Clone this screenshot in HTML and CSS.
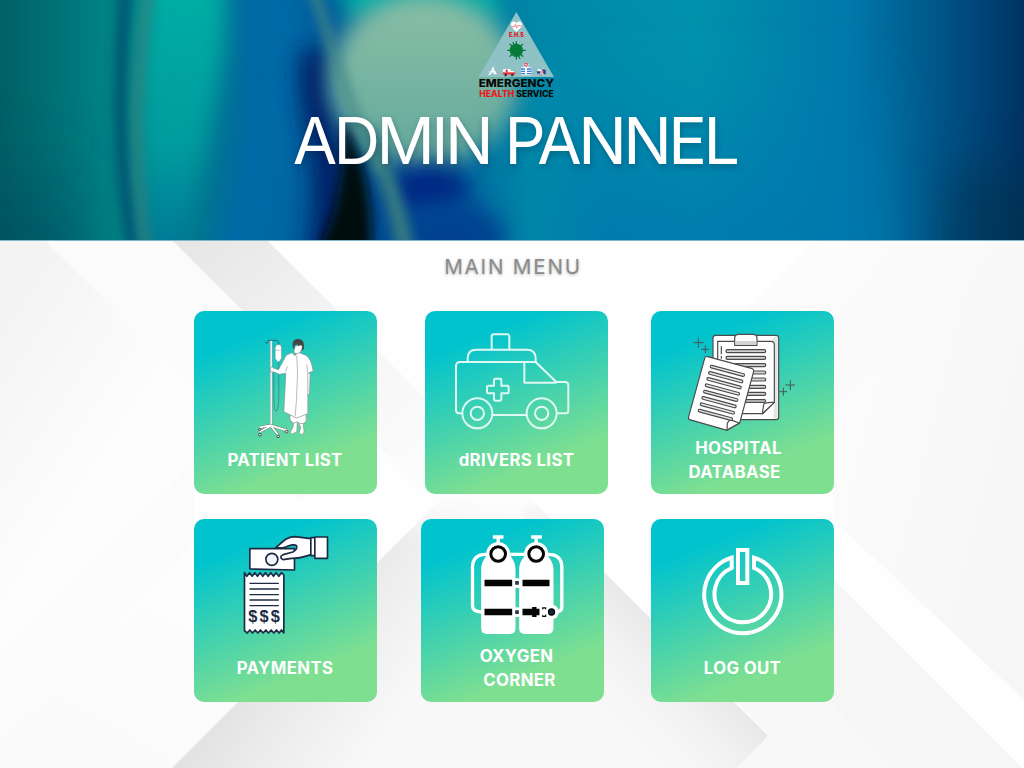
FILE: index.html
```html
<!DOCTYPE html>
<html lang="en">
<head>
<meta charset="utf-8">
<title>Admin Pannel</title>
<link rel="stylesheet" href="styles.css">
</head>
<body>
<svg class="page-art" viewBox="0 240 1024 528" aria-hidden="true">
  <defs>
    <linearGradient id="a1" x1="0" y1="0" x2="1" y2="1"><stop offset="0" stop-color="#e5e5e5"/><stop offset=".45" stop-color="#f5f5f5"/><stop offset="1" stop-color="#fefefe"/></linearGradient>
    <linearGradient id="a2" x1="0" y1="1" x2=".7" y2=".2"><stop offset="0" stop-color="#f5f5f5"/><stop offset="1" stop-color="#fefefe"/></linearGradient>
    <linearGradient id="a3" gradientUnits="userSpaceOnUse" x1="190" y1="700" x2="340" y2="800"><stop offset="0" stop-color="#dedede"/><stop offset=".55" stop-color="#ededed"/><stop offset="1" stop-color="#f8f8f8"/></linearGradient>
    <linearGradient id="a4" gradientUnits="userSpaceOnUse" x1="690" y1="660" x2="610" y2="740"><stop offset="0" stop-color="#e8e8e8"/><stop offset="1" stop-color="#f8f8f8" stop-opacity="0"/></linearGradient>
    <linearGradient id="a5" gradientUnits="userSpaceOnUse" x1="0" y1="300" x2="150" y2="400"><stop offset="0" stop-color="#f3f3f3"/><stop offset="1" stop-color="#fdfdfd"/></linearGradient>
    <linearGradient id="a6" x1="0" y1="0" x2="1" y2=".6"><stop offset="0" stop-color="#fcfcfc"/><stop offset="1" stop-color="#f3f3f3"/></linearGradient>
    <linearGradient id="a7" x1="0" y1="0" x2="0" y2="1"><stop offset="0" stop-color="#fefefe"/><stop offset="1" stop-color="#fefefe" stop-opacity="0"/></linearGradient>
  </defs>
  <rect y="240" width="1024" height="528" fill="#fefefe"/>
  <path d="M0 240H45L194 389V462L0 650Z" fill="url(#a5)"/>
  <path d="M45 240H172L372 440L300 500L194 389Z" fill="#fbfbfb"/>
  <path d="M172 240H267L480 453L430 498Z" fill="url(#a1)"/>
  <path d="M0 768V740L240 505H455L190 768Z" fill="url(#a2)" opacity=".5"/>
  <path d="M0 650L194 462V545L0 740Z" fill="#fbfbfb"/>
  <path d="M815 240H1005L830 415L740 420V315Z" fill="url(#a6)" opacity=".55"/>
  <path d="M1005 240H1024V700L834 520V411Z" fill="url(#a6)" opacity=".7"/>
  <path d="M834 580L1022 768H890L790 668Z" fill="#f6f6f6"/>
  <path d="M735 700L830 702L890 768H737L768 736Z" fill="#f8f8f8"/>
  <path d="M172 768L445 495H527L768 736L737 768Z" fill="url(#a3)"/>
  <path d="M527 495L768 736L737 768H480Z" fill="url(#a4)"/>
  <rect x="376" y="494" width="275" height="50" fill="url(#a7)"/>
</svg>

<header class="banner">
  <svg class="banner-art" viewBox="0 0 1024 240" preserveAspectRatio="none" aria-hidden="true">
    <defs>
      <linearGradient id="b0" x1="0" y1="0" x2="1" y2="0"><stop offset="0" stop-color="#006066"/><stop offset=".1" stop-color="#008184"/><stop offset=".14" stop-color="#00807f"/><stop offset=".26" stop-color="#0068a2"/><stop offset=".38" stop-color="#004b94"/><stop offset=".52" stop-color="#0087a8"/><stop offset=".68" stop-color="#0092ac"/><stop offset=".83" stop-color="#0078aa"/><stop offset=".92" stop-color="#005487"/><stop offset="1" stop-color="#003264"/></linearGradient>
      <linearGradient id="b1" x1="0" y1="0" x2="0" y2="1"><stop offset="0" stop-color="#00b0a6"/><stop offset=".6" stop-color="#009b9e"/><stop offset="1" stop-color="#007096"/></linearGradient>
      <linearGradient id="b2" x1="0" y1="0" x2="0" y2="1"><stop offset=".25" stop-color="#0077b2" stop-opacity="0"/><stop offset="1" stop-color="#0078ac"/></linearGradient>
      <linearGradient id="b3" x1="0" y1="0" x2="0" y2="1"><stop offset="0" stop-color="#8abfa5"/><stop offset="1" stop-color="#62a89d"/></linearGradient>
      <linearGradient id="b4" x1="0" y1="0" x2="0" y2="1"><stop offset=".4" stop-color="#003e58" stop-opacity="0"/><stop offset="1" stop-color="#003e58" stop-opacity=".6"/></linearGradient>
      <filter id="f6" filterUnits="userSpaceOnUse" x="-100" y="-100" width="1224" height="440"><feGaussianBlur stdDeviation="6"/></filter>
      <filter id="f12" filterUnits="userSpaceOnUse" x="-100" y="-100" width="1224" height="440"><feGaussianBlur stdDeviation="11"/></filter>
      <filter id="f22" filterUnits="userSpaceOnUse" x="-150" y="-150" width="1324" height="540"><feGaussianBlur stdDeviation="26"/></filter>
    </defs>
    <rect width="1024" height="240" fill="url(#b0)"/>
    <rect x="560" y="-20" width="330" height="300" fill="url(#b2)" filter="url(#f22)"/>
    <rect x="-60" width="150" height="300" fill="url(#b4)" filter="url(#f22)"/>
    <path d="M127 -20C118 80 118 170 138 270" stroke="#00476e" stroke-width="10" fill="none" filter="url(#f6)"/>
    <path d="M150 -30H222C238 50 200 150 184 270H152C136 160 136 60 150 -30Z" fill="url(#b1)" filter="url(#f12)"/>
    <path d="M150 -20C135 80 132 160 148 270" stroke="#467f7e" stroke-width="6" fill="none" filter="url(#f6)"/>
    <path d="M262 -30C290 50 275 150 235 280" stroke="#0069a6" stroke-width="52" fill="none" filter="url(#f12)"/>
    <path d="M316 50C308 130 344 140 322 270" stroke="#002468" stroke-width="32" fill="none" filter="url(#f12)"/>
    <path d="M330 -30H500V24H350Z" fill="#00a7a4" filter="url(#f12)"/>
    <ellipse cx="424" cy="80" rx="94" ry="86" fill="url(#b3)" filter="url(#f12)"/>
    <ellipse cx="430" cy="190" rx="40" ry="24" fill="#002783" filter="url(#f12)"/>
    <ellipse cx="450" cy="238" rx="56" ry="38" fill="#004291" filter="url(#f12)"/>
    <path d="M346 122C362 155 378 205 370 270H305C341 218 340 175 346 122Z" fill="#00070e" filter="url(#f6)"/>
    <path d="M366 130C388 175 398 210 410 270" stroke="#347c82" stroke-width="17" fill="none" filter="url(#f6)"/>
    <path d="M312 -15C340 70 350 115 384 170" stroke="#478b86" stroke-width="8" fill="none" filter="url(#f6)"/>
    <rect x="950" y="170" width="160" height="140" fill="#00304e" opacity=".6" filter="url(#f22)"/>
  </svg>
  <svg class="logo" viewBox="0 0 240 270" role="img" aria-label="Emergency Health Service">
    <path d="M115 0L228 195H2Z" fill="#8fc2c5"/>
    <path d="M115 60C105 50 99 45 99 37C99 27 111 26 115 34C119 26 132 27 132 37C132 45 125 51 115 60Z" fill="#fff"/>
    <path d="M101 44H109L112 37L116 48L119 41H130" fill="none" stroke="#e94a50" stroke-width="2"/>
    <text class="logo-ehs" x="93" y="76" textLength="44" lengthAdjust="spacingAndGlyphs">E.H.S</text>
    <g stroke="#087b3b" stroke-width="4" stroke-linecap="round"><path d="M115 89V141M89 115H142M96 97L134 133M134 97L96 133M105 92L111 102M125 139L120 128"/></g>
    <circle cx="115" cy="115" r="20" fill="#087b3b"/>
    <g fill="#f4f8ff">
      <circle cx="45" cy="170" r="4"/><path d="M37 174H50L57 187H48L44 180L36 189H30L39 178L31 181Z"/>
      <path d="M75 171H98V177H107L112 184V188H75Z"/><path d="M129 166H137V156H151V166H160V190H129Z"/>
      <path d="M181 170L190 174L197 168L201 187H184L176 183Z"/>
    </g>
    <path d="M58 177L62 190M33 177L40 174M55 172H61" stroke="#aab4b8" stroke-width="3"/>
    <path d="M75 181H112V188H75Z" fill="#ec3034"/><path d="M83 173H89V181H83Z" fill="#ec3034"/>
    <circle cx="83" cy="189" r="4" fill="#333"/><circle cx="103" cy="189" r="4" fill="#333"/>
    <path d="M129 171H141M147 171H160M129 178H141M147 178H160M129 185H141M147 185H160" stroke="#367ed7" stroke-width="4"/>
    <circle cx="144" cy="158" r="6" fill="#dc3548"/><path d="M144 154V162M140 158H148" stroke="#fff" stroke-width="2"/>
    <path d="M176 178H187V185H178ZM193 170L203 174V188L194 184Z" fill="#263f91"/><path d="M189 177H195V183H189ZM183 189H192" stroke="#df4e59" fill="#fff" stroke-width="2"/>
    <text class="logo-name" x="2" y="225" textLength="226" lengthAdjust="spacingAndGlyphs">EMERGENCY</text>
    <text class="logo-sub" x="4" y="255" textLength="223" lengthAdjust="spacingAndGlyphs"><tspan class="red">HEALTH</tspan> SERVICE</text>
  </svg>
  <h1 class="title">ADMIN PANNEL</h1>
</header>

<main class="menu">
  <h2 class="menu-title">MAIN MENU</h2>

  <div class="row row-top">
    <a class="card">
      <svg class="art" viewBox="10.5 18 549 372" aria-hidden="true">
        <path d="M224 110L229 116L233 106H260L265 113V119" fill="none" stroke="#276b72" stroke-width="3"/>
        <path d="M242 107V365" stroke="#8fa5a5" stroke-width="8"/><path d="M242 108V365" stroke="#fff" stroke-width="4"/>
        <path d="M265 168V250C266 290 263 312 258 318C249 318 250 304 250 203" fill="none" stroke="#3e7778" stroke-width="2"/>
        <path d="M258 119H270L273 128V160L266 170H261L254 160V128Z" fill="#fff" stroke="#738f92" stroke-width="1.5"/><path d="M254 136H273" stroke="#aaa" stroke-width="2"/>
        <path d="M207 367L240 361L289 376M240 364L207 380M243 365L263 389" fill="none" stroke="#777" stroke-width="8"/><path d="M207 367L240 361L289 376M240 364L207 380M243 365L263 389" fill="none" stroke="#fff" stroke-width="5"/>
        <g fill="#eee" stroke="#444" stroke-width="3"><circle cx="207" cy="374" r="3"/><circle cx="208" cy="389" r="4"/><circle cx="263" cy="394" r="4"/><circle cx="288" cy="380" r="4"/></g>
        <g fill="#fff" stroke="#8a8f90" stroke-width="2" stroke-linejoin="round">
          <path d="M303 330L300 349L309 354L308 366L299 382L305 387L319 380L321 334ZM327 334L325 356L331 367L326 384L333 389L341 382L338 357L344 351L346 329Z"/>
          <path d="M298 330L299 346L309 354L320 350L328 356L340 355L347 348V328Z"/>
          <path d="M347 198L344 263L350 271L357 267L359 207Z"/>
          <path d="M304 143L287 151L264 194L250 190L244 185L239 192L242 201L251 201L267 208L286 205L280 320L302 331L318 339L352 326V205L368 198C364 174 357 153 341 149L324 142L313 151Z"/>
          <path d="M310 143L313 125L330 117L336 124L331 140L320 146Z"/>
        </g>
        <path d="M309 147L319 154L321 205L318 284L314 334M291 184L285 200M349 178L351 203" fill="none" stroke="#999" stroke-width="2"/>
        <path d="M308 130C304 116 307 103 320 102C337 101 342 111 340 133L334 138C337 129 335 122 332 120L322 124V118L312 121V132Z" fill="#464649"/>
      </svg>
      <span class="label">PATIENT LIST</span>
    </a>
    <a class="card">
      <svg class="art" viewBox="15 18 549 372" aria-hidden="true">
        <g class="ambulance">
          <path d="M215 133V94Q215 88 221 88H262Q268 88 268 94V133M143 170V160Q143 134 169 134H321Q347 134 347 160V170M128 325H119Q108 325 108 314V184Q108 171 121 171H347L409 231H435Q445 231 445 241V318Q445 325 438 325H411M313 171V233H409M218 330H320"/>
          <circle cx="172" cy="325" r="45"/><circle cx="172" cy="325" r="20"/><circle cx="365" cy="325" r="45"/><circle cx="365" cy="325" r="20"/>
          <path d="M226 221H240Q244 221 244 225V242H262Q266 242 266 246V261Q266 265 262 265H244V283Q244 287 240 287H226Q222 287 222 283V265H205Q201 265 201 261V246Q201 242 205 242H222V225Q222 221 226 221Z"/>
        </g>
      </svg>
      <span class="label drivers">dRIVERS LIST</span>
    </a>
    <a class="card">
      <svg class="art" viewBox="9 18 549 372" aria-hidden="true">
        <path d="M151 98V129M136 113H167M172 121V145M160 133H184M427 226V255M412 240H441M406 248V272M395 260H417" stroke="#4c5356" stroke-width="3"/>
        <g fill="#fff" stroke="#4b4b4d" stroke-width="3.5" stroke-linejoin="round">
          <rect x="195" y="91" width="197" height="253" rx="8"/>
          <path d="M389 98V336Q389 341 384 341H376L378 292V116L368 109L382 94Z" fill="#e5e5e5" stroke="none"/>
          <path d="M209 109H369Q379 109 379 119V292L345 326H209Z"/>
          <path d="M343 326L347 299Q348 291 379 292Z"/>
          <path d="M260 121V100Q260 88 272 88H315Q327 88 327 100V121Z"/>
          <path d="M262 108H325V119H262Z" fill="#d4d4d4" stroke="none"/>
          <path d="M220 124V148M220 153V161" fill="none"/>
          <g fill="#d1d1d1"><rect x="234" y="134" width="119" height="9" rx="4"/><rect x="234" y="154" width="119" height="9" rx="4"/><rect x="234" y="176" width="119" height="9" rx="4"/><rect x="234" y="198" width="119" height="9" rx="4"/><rect x="234" y="219" width="119" height="9" rx="4"/><rect x="234" y="241" width="119" height="9" rx="4"/><rect x="234" y="262" width="119" height="9" rx="4"/><rect x="234" y="284" width="119" height="8" rx="4"/></g>
          <path d="M179 155L313 191Q318 193 317 199L275 354L237 376L125 344Q120 342 122 335L170 160Q172 153 179 155Z"/>
          <path d="M237 375L238 355Q244 342 252 346L274 354Z"/>
          <g fill="#e8e8e8"><rect x="188" y="180" width="106" height="8" rx="4" transform="rotate(15 188 180)"/><rect x="183" y="199" width="106" height="8" rx="4" transform="rotate(15 183 199)"/><rect x="178" y="217" width="106" height="8" rx="4" transform="rotate(15 178 217)"/><rect x="173" y="236" width="106" height="8" rx="4" transform="rotate(15 173 236)"/><rect x="168" y="255" width="106" height="8" rx="4" transform="rotate(15 168 255)"/><rect x="163" y="274" width="106" height="8" rx="4" transform="rotate(15 163 274)"/><rect x="158" y="293" width="106" height="8" rx="4" transform="rotate(15 158 293)"/><rect x="152" y="312" width="106" height="8" rx="4" transform="rotate(15 152 312)"/></g>
        </g>
      </svg>
      <span class="label hospital"><span class="line">HOSPITAL</span><span class="line database">DATABASE</span></span>
    </a>
  </div>

  <div class="row row-bottom">
    <a class="card">
      <svg class="art" viewBox="10.5 12 549 372" aria-hidden="true">
        <g fill="#fff" stroke="#1c2b43" stroke-width="5" stroke-linejoin="round">
          <path d="M178 101H312V165L178 162Z"/>
          <circle cx="244" cy="133" r="18" fill="#f1f5fc"/>
          <path d="M255 99C278 80 288 65 313 65L361 71V119C341 125 331 131 303 130L278 134C268 130 269 122 278 119L307 111C316 106 321 99 318 92C308 84 294 94 278 98Z"/>
          <path d="M361 68H373V122H361ZM373 66H411V130H373Z"/>
          <path d="M162 173L169 184L177 173L185 184L193 173L201 184L209 173L217 184L225 173L233 184L241 173L249 184L257 173L265 184L273 173L280 180V354L273 345L266 354L258 345L250 354L242 345L234 354L226 345L218 354L210 345L202 354L194 345L186 354L178 345L170 354L162 347Z"/>
          <path d="M177 205H265M177 222H265M177 239H265M177 255H265M177 272H265" stroke-width="4"/>
        </g>
        <text class="dollars" x="173" y="322" textLength="95" lengthAdjust="spacing">$$$</text>
      </svg>
      <span class="label payments">PAYMENTS</span>
    </a>
    <a class="card card-oxygen">
      <svg class="art" viewBox="7.5 12 549 372" aria-hidden="true">
        <g fill="none" stroke="#fff" stroke-width="10">
          <path d="M274 118H318M206 118C178 117 163 130 162 155V272Q162 290 190 291M386 118C414 117 429 130 430 155V275Q430 291 410 291M223 66H255M239 66V85M338 66H370M353 66V85"/>
        </g>
        <g fill="#fff"><path d="M188 165C188 137 201 129 208 116H272C281 132 291 139 291 165V340Q291 357 274 357H205Q188 357 188 340ZM302 165C302 137 316 129 323 116H384C395 132 405 143 405 165V339Q403 357 387 357H319Q302 357 302 340Z"/>
        <circle cx="239" cy="117" r="36"/><circle cx="353" cy="117" r="36"/><rect x="280" y="190" width="32" height="29"/><rect x="280" y="277" width="32" height="29"/></g>
        <g fill="#fff" stroke="#050505" stroke-width="9"><circle cx="239" cy="117" r="22"/><circle cx="353" cy="117" r="22"/></g>
        <path d="M198 194H281V214H198ZM312 194H393V214H312ZM198 281H281V301H198ZM312 281H341V276H354V281H363V301H354V306H341V301H312Z" fill="#050505"/>
        <path d="M290 198H301V209H290ZM290 286H301V297H290Z" fill="#273a4b"/>
        <circle cx="399" cy="291" r="22" fill="#fff"/><circle cx="399" cy="291" r="9" fill="#1a253a" stroke="#050505" stroke-width="4"/>
        <path d="M371 277H383V284L377 280L371 284ZM371 299L377 303L383 297V306H371Z" fill="#050505"/>
      </svg>
      <span class="label oxygen"><span class="line">OXYGEN</span><span class="line corner">CORNER</span></span>
    </a>
    <a class="card">
      <svg class="art" viewBox="9 12 549 372" aria-hidden="true">
        <g fill="none" stroke="#fff" stroke-width="12"><path d="M251 128A116 116 0 1 0 318 128V159A85 85 0 1 1 251 159Z"/><path d="M270 105H298V204H270Z"/></g>
      </svg>
      <span class="label logout">LOG OUT</span>
    </a>
  </div>
</main>
</body>
</html>
```
FILE: styles.css
```css
* { box-sizing: border-box; }
body {
  margin: 0;
  width: 1024px;
  height: 768px;
  overflow: hidden;
  position: relative;
  background: #fefefe;
  font-family: Inter, "Liberation Sans", sans-serif;
}
.page-art {
  position: absolute;
  left: 0;
  bottom: 0;
  width: 1024px;
  height: 528px;
  z-index: -1;
}
.banner {
  position: relative;
  height: 241px;
  padding-top: 12px;
  border-bottom: 1px solid #80b5cb;
  display: flex;
  flex-direction: column;
  align-items: center;
  overflow: hidden;
}
.banner-art {
  position: absolute;
  inset: 0;
  width: 100%;
  height: 240px;
}
.logo {
  position: relative;
  width: 80px;
  height: 90px;
  margin-left: 12px;
  flex: none;
}
.logo-ehs { font: 900 17px Inter, sans-serif; fill: #e61b2b; }
.logo-name { font: 800 32px Inter, sans-serif; fill: #080808; }
.logo-sub { font: 800 26px Inter, sans-serif; fill: #080808; }
.red { fill: #ee1818; }
.title {
  position: relative;
  margin: 0 0 0 5px;
  font-size: 64.5px;
  line-height: 78px;
  font-weight: 400;
  letter-spacing: -3.6px;
  white-space: nowrap;
  color: #fff;
  text-shadow: 1px 3px 6px rgba(0, 25, 50, .28);
}
.menu {
  padding: 12px 0 0 193.5px;
}
.menu-title {
  margin: 0 193.5px 0 0;
  padding-left: 2px;
  height: 58px;
  font-size: 20.6px;
  line-height: 28px;
  font-weight: 400;
  letter-spacing: 1.8px;
  text-align: center;
  color: #8b8b8b;
  text-shadow: 0 1px 3px rgba(0, 0, 0, .3);
}
.row { display: flex; }
.row-top { column-gap: 43px; margin-bottom: 25px; }
.row-top .card:first-child { margin-right: 5.5px; }
.row-bottom { column-gap: 44px; }
.row-bottom .card:last-child { margin-left: 3.5px; }
.card {
  width: 183px;
  height: 183px;
  border-radius: 10px;
  display: flex;
  flex-direction: column;
  background: linear-gradient(158deg, #00c3ce 18%, #7fdf91 78%);
}
.art {
  width: 183px;
  height: 124px;
  overflow: visible;
  flex: none;
}
.label {
  height: 50px;
  display: flex;
  flex-direction: column;
  align-items: center;
  justify-content: center;
  font-size: 16.8px;
  line-height: 24px;
  font-weight: 700;
  letter-spacing: .35px;
  white-space: nowrap;
  color: #fff;
}
.row-bottom .label { line-height: 24.5px; height: 49px; padding-top: 1px; }
.hospital .line { margin-right: 8px; }
.hospital .database { margin-right: 16px; }
.oxygen .line { margin-left: 9px; }
.oxygen .corner { margin-left: 15px; }
.ambulance {
  fill: none;
  stroke: #dff8f3;
  stroke-width: 6;
  stroke-linejoin: round;
}
.dollars {
  font: 700 49px "Liberation Sans", sans-serif;
  fill: #1c2b43;
}
```
